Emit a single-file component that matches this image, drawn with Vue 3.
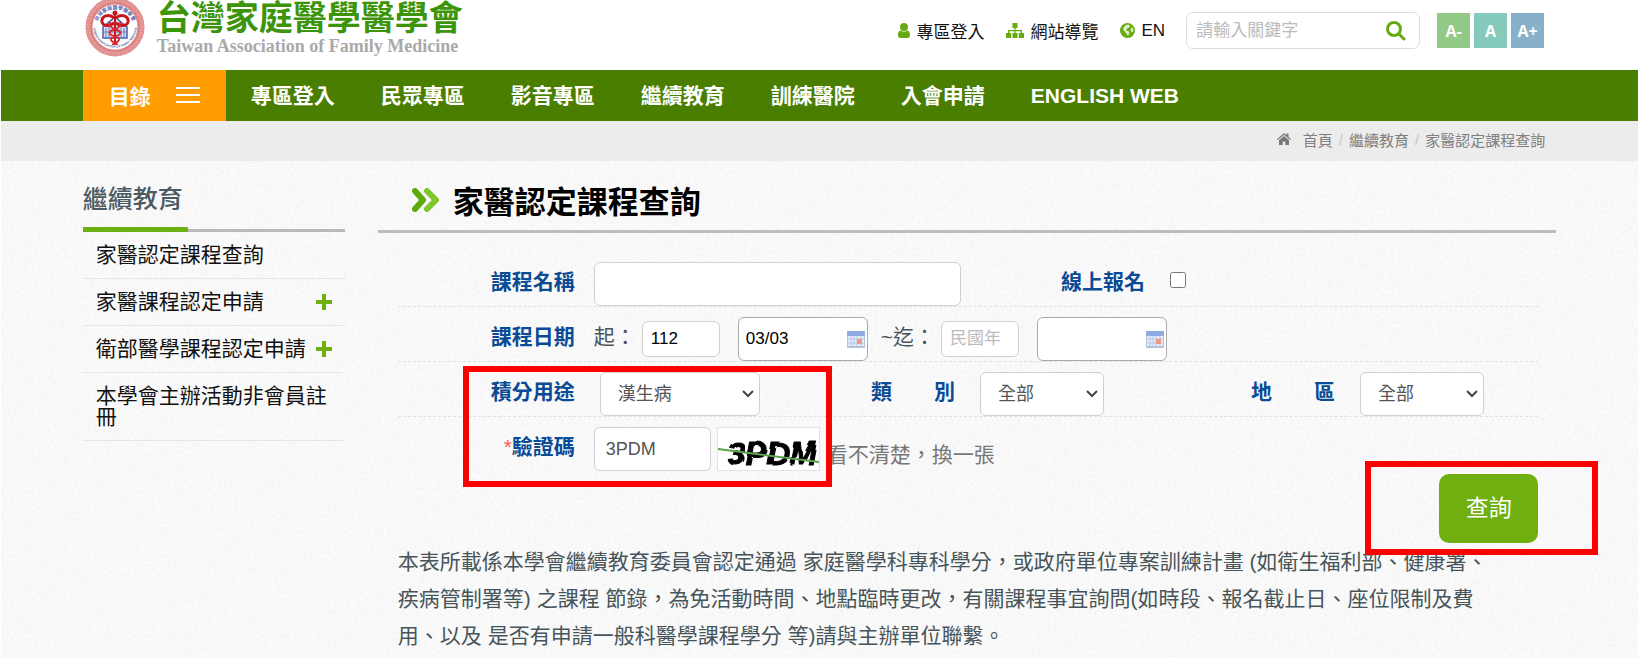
<script setup>
import { ref } from 'vue'

const topLinks = [
  { icon: 'user', text: '專區登入' },
  { icon: 'sitemap', text: '網站導覽' },
  { icon: 'globe', text: 'EN' },
]
const sizes = [
  { text: 'A-', cls: 'small' },
  { text: 'A', cls: 'normal' },
  { text: 'A+', cls: 'large' },
]
const navItems = ['專區登入', '民眾專區', '影音專區', '繼續教育', '訓練醫院', '入會申請', 'ENGLISH WEB']
const sideItems = [
  { text: '家醫認定課程查詢', more: false },
  { text: '家醫課程認定申請', more: true },
  { text: '衛部醫學課程認定申請', more: true },
  { text: '本學會主辦活動非會員註冊', more: false },
]
const keyword = ref('')
const courseName = ref('')
const online = ref(false)
const startYear = ref('112')
const startDay = ref('03/03')
const endYear = ref('')
const endDay = ref('')
const usage = ref('漢生病')
const category = ref('全部')
const region = ref('全部')
const code = ref('3PDM')
</script>

<template>
  <div class="page" lang="zh-Hant">
    <header class="top container">
      <a class="brand" href="#">
        <svg class="seal" viewBox="0 0 60 60" aria-hidden="true">
          <defs>
            <path id="arcTop" d="M11.5 27 A19 19 0 0 1 48.500 27" />
            <path id="arcBottom" d="M8.500 24 A22 22 0 1 0 51.500 24" />
          </defs>
          <circle cx="30" cy="30" r="26" fill="#fff" stroke="#e08c8a" stroke-width="7" />
          <circle cx="30" cy="30" r="28" fill="none" stroke="#f3c9c6" stroke-width="1" stroke-dasharray="1 2" />
          <circle cx="30" cy="30" r="26" fill="none" stroke="#f3c9c6" stroke-width="1" stroke-dasharray="1 1.500" />
          <circle cx="30" cy="30" r="24" fill="none" stroke="#d67372" stroke-width="1" stroke-dasharray="2 1" />
          <text class="seal-text" font-size="5"><textPath href="#arcTop" startOffset="50%" text-anchor="middle">台灣家庭醫學醫學會</textPath></text>
          <text class="seal-text" font-size="3"><textPath href="#arcBottom" startOffset="50%" text-anchor="middle">TAIWAN ASSOCIATION OF FAMILY MEDICINE</textPath></text>
          <path d="M18 30 L30 20 L42 30 V41 H18 Z" fill="#d5dcf0" stroke="#4a5fae" stroke-width="1.500" />
          <path d="M21 31 V41 M24 28 V41 M36 28 V41 M39 31 V41 M18 35 H42" stroke="#6d80bf" stroke-width="1" />
          <path d="M30 16 V48" stroke="#c9141a" stroke-width="2" />
          <circle cx="30" cy="16" r="2.500" fill="#c9141a" />
          <path d="M29 21 C24 16 16 19 17 25 C18 29 24 30 29 26 M31 21 C36 16 44 19 43 25 C42 29 36 30 31 26" fill="none" stroke="#c9141a" stroke-width="3" />
          <path d="M25 25 C22 33 38 32 35 37 C33 40 25 39 26 43 C27 46 32 45 32 48 M35 25 C38 33 22 32 25 37 C27 40 35 39 34 43 C33 46 28 45 28 48" fill="none" stroke="#d9262b" stroke-width="2" />
        </svg>
        <span class="brand-text">
          <span class="brand-zh">台灣家庭醫學醫學會</span>
          <span class="brand-en">Taiwan Association of Family Medicine</span>
        </span>
      </a>
      <div class="tools">
        <a v-for="l in topLinks" :key="l.text" class="tool" href="#">
          <svg v-if="l.icon === 'user'" class="ic-user" viewBox="0 0 12 15" aria-hidden="true">
            <circle cx="6" cy="4" r="4" />
            <path d="M3 7.500 C0.500 7.500 0 10 0 12 C0 14 1 15 2.500 15 H9.500 C11 15 12 14 12 12 C12 10 11.500 7.500 9 7.500 C7 9.200 5 9.200 3 7.500 Z" />
          </svg>
          <svg v-else-if="l.icon === 'sitemap'" class="ic-map" viewBox="0 0 18 15" aria-hidden="true">
            <path d="M6.500 0 H11.500 V5 H9.600 V7 H16 V10 H18 V15 H12.800 V10 H14.600 V8.300 H9.600 V10 H11.500 V15 H6.500 V10 H8.400 V8.300 H3.400 V10 H5.200 V15 H0 V10 H2 V7 H8.400 V5 H6.500 Z" />
          </svg>
          <svg v-else class="ic-globe" viewBox="0 0 15 15" aria-hidden="true">
            <circle cx="7.500" cy="7.500" r="7.500" />
            <path class="land" d="M6 2 L8.500 1.500 L10 3 L8.500 5 L7 5.500 L6 7.500 L8.500 8 L9.500 10 L8 13 L6.500 10.500 L5 9 L3 6.500 L4 4 Z M11.500 4 L13.200 6 L13.500 8 L12 9.500 L10.500 7.500 Z" />
          </svg>
          <span>{{ l.text }}</span>
        </a>
        <form class="search" role="search" @submit.prevent>
          <input v-model="keyword" type="text" placeholder="請輸入關鍵字" aria-label="請輸入關鍵字" />
          <button type="submit" aria-label="搜尋">
            <svg viewBox="0 0 20 20"><circle cx="8" cy="8" r="6.500" /><path d="M13 13 L18 18" /></svg>
          </button>
        </form>
        <div class="sizes">
          <button v-for="s in sizes" :key="s.text" type="button" :class="s.cls">{{ s.text }}</button>
        </div>
      </div>
    </header>

    <nav class="nav">
      <div class="container nav-in">
        <button class="menu" type="button">
          <span>目錄</span>
          <svg viewBox="0 0 24 18" aria-hidden="true"><path d="M0 2 H24 M0 9 H24 M0 16 H24" /></svg>
        </button>
        <a v-for="n in navItems" :key="n" href="#">{{ n }}</a>
      </div>
    </nav>

    <div class="crumbs">
      <div class="container crumbs-in">
        <svg viewBox="0 0 14 12" aria-hidden="true">
          <path d="M7 0 L9.500 2.200 V0.500 H11.500 V4 L14 6.200 L13.200 7 L7 1.800 L0.800 7 L0 6.200 Z M7 3 L12 7.200 V12 H8.300 V8.500 H5.700 V12 H2 V7.200 Z" />
        </svg>
        <a href="#">首頁</a><i>/</i><a href="#">繼續教育</a><i>/</i><a href="#">家醫認定課程查詢</a>
      </div>
    </div>

    <div class="body">
      <svg class="paper" aria-hidden="true">
        <filter id="grain">
          <feTurbulence type="fractalNoise" baseFrequency="0.3" numOctaves="2" seed="4" />
          <feColorMatrix type="matrix" values="0 0 0 0 0.45  0 0 0 0 0.45  0 0 0 0 0.45  0.18 0 0 0 -0.07" />
        </filter>
        <rect width="100%" height="100%" filter="url(#grain)" />
      </svg>
      <div class="container columns">
        <aside class="side">
          <h2>繼續教育</h2>
          <ul>
            <li v-for="s in sideItems" :key="s.text">
              <a href="#">{{ s.text }}</a>
              <svg v-if="s.more" viewBox="0 0 16 16" aria-hidden="true"><path d="M6 0 H10 V6 H16 V10 H10 V16 H6 V10 H0 V6 H6 Z" /></svg>
            </li>
          </ul>
        </aside>

        <main class="main">
          <h1>
            <svg viewBox="0 0 28 24" aria-hidden="true">
              <path d="M3 3 L11 12 L3 21" stroke="#5fa909" />
              <path d="M15 3 L24 12 L15 21" stroke="#7fc72c" />
            </svg>
            家醫認定課程查詢
          </h1>
          <form class="form" @submit.prevent>
            <div class="row two">
              <div class="cell">
                <label for="name">課程名稱</label>
                <input id="name" v-model="courseName" class="box wide" type="text" />
              </div>
              <div class="cell">
                <label for="online">線上報名</label>
                <input id="online" v-model="online" class="tick" type="checkbox" />
              </div>
            </div>
            <div class="row">
              <div class="cell">
                <label for="startYear">課程日期</label>
                <span class="word">起：</span>
                <input id="startYear" v-model="startYear" class="box year" type="text" placeholder="民國年" />
                <span class="date">
                  <input v-model="startDay" class="box" type="text" aria-label="起日" />
                  <svg viewBox="0 0 18 17" aria-hidden="true"><rect width="18" height="17" rx="1" fill="#b4c1da" /><rect width="18" height="5" rx="1" fill="#8fabe2" /><path d="M1 5 H17 V15 H1 Z" fill="#e6edfa" /><path d="M4 5 V15 M7 5 V15 M10 5 V15 M14 5 V15 M1 8 H17 M1 12 H17" stroke="#b9c9e8" /><rect x="10" y="8" width="5" height="5" fill="#f09a84" /></svg>
                </span>
                <span class="word till">~迄：</span>
                <input v-model="endYear" class="box year" type="text" placeholder="民國年" aria-label="迄年" />
                <span class="date">
                  <input v-model="endDay" class="box" type="text" aria-label="迄日" />
                  <svg viewBox="0 0 18 17" aria-hidden="true"><rect width="18" height="17" rx="1" fill="#b4c1da" /><rect width="18" height="5" rx="1" fill="#8fabe2" /><path d="M1 5 H17 V15 H1 Z" fill="#e6edfa" /><path d="M4 5 V15 M7 5 V15 M10 5 V15 M14 5 V15 M1 8 H17 M1 12 H17" stroke="#b9c9e8" /><rect x="10" y="8" width="5" height="5" fill="#f09a84" /></svg>
                </span>
              </div>
            </div>
            <div class="row three">
              <div class="cell">
                <label for="usage">積分用途</label>
                <span class="pick long">
                  <select id="usage" v-model="usage" class="box"><option>漢生病</option></select>
                  <svg viewBox="0 0 12 8" aria-hidden="true"><path d="M1 1 L6 6 L11 1" /></svg>
                </span>
              </div>
              <div class="cell">
                <label for="category">類　　別</label>
                <span class="pick">
                  <select id="category" v-model="category" class="box"><option>全部</option></select>
                  <svg viewBox="0 0 12 8" aria-hidden="true"><path d="M1 1 L6 6 L11 1" /></svg>
                </span>
              </div>
              <div class="cell">
                <label for="region">地　　區</label>
                <span class="pick">
                  <select id="region" v-model="region" class="box"><option>全部</option></select>
                  <svg viewBox="0 0 12 8" aria-hidden="true"><path d="M1 1 L6 6 L11 1" /></svg>
                </span>
              </div>
            </div>
            <div class="row last">
              <div class="cell">
                <label for="code"><b>*</b>驗證碼</label>
                <input id="code" v-model="code" class="box code" type="text" />
                <svg class="captcha" viewBox="0 0 101 42">
                  <filter id="wobble" x="-10%" y="-20%" width="120%" height="140%">
                    <feTurbulence type="turbulence" baseFrequency="0.04" numOctaves="1" seed="7" />
                    <feDisplacementMap in="SourceGraphic" scale="4" />
                  </filter>
                  <text x="8" y="35" font-size="32" filter="url(#wobble)">3PDM</text>
                  <path d="M0 21 L101 34" />
                </svg>
                <a class="change" href="#">看不清楚，換一張</a>
              </div>
            </div>
            <div class="mark mark-fields"></div>
            <div class="actions">
              <div class="submit">
                <button type="submit">查詢</button>
                <div class="mark mark-submit"></div>
              </div>
            </div>
          </form>
          <p>本表所載係本學會繼續教育委員會認定通過 家庭醫學科專科學分，或政府單位專案訓練計畫 (如衛生福利部、健康署、疾病管制署等) 之課程 節錄，為免活動時間、地點臨時更改，有關課程事宜詢問(如時段、報名截止日、座位限制及費用、以及 是否有申請一般科醫學課程學分 等)請與主辦單位聯繫。</p>
        </main>
      </div>
    </div>
  </div>
</template>

<style>
body {
  margin: 0;
  background: #fff;
}
</style>

<style scoped>
* {
  box-sizing: border-box;
}
.page {
  min-height: 100vh;
  display: flex;
  flex-direction: column;
  padding: 0 1px;
  color: #47555a;
  font-family: "Liberation Sans", "Noto Sans CJK TC", sans-serif;
}
a {
  color: inherit;
  text-decoration: none;
}
button,
input,
select {
  font-family: inherit;
  margin: 0;
}
h1,
h2,
p,
ul {
  margin: 0;
  padding: 0;
}
.container {
  width: 90%;
  margin: 0 auto;
}
.top {
  height: 70px;
  display: flex;
  justify-content: space-between;
  align-items: flex-start;
  padding-right: 12px;
}
.brand {
  display: flex;
  gap: 12px;
  padding-left: 2px;
}
.seal {
  width: 60px;
  height: 60px;
  margin-top: -3px;
}
.seal-text {
  fill: #4a5fae;
  font-family: "Liberation Sans", "Noto Sans CJK TC", sans-serif;
  font-weight: bold;
}
.brand-text {
  display: flex;
  flex-direction: column;
  white-space: nowrap;
}
.brand-zh {
  color: #3c9408;
  font-size: 34px;
  line-height: 36px;
  font-weight: bold;
}
.brand-en {
  color: #a9a9a9;
  font: bold 18px/20px "Liberation Serif", serif;
}
.tools {
  display: flex;
  align-items: center;
  padding-top: 12px;
  color: #111;
  font-size: 17px;
}
.tool {
  display: flex;
  align-items: center;
  gap: 7px;
  margin-right: 21px;
  white-space: nowrap;
}
.tool svg {
  height: 15px;
  fill: #66ab13;
}
.ic-user {
  width: 12px;
}
.ic-map {
  width: 18px;
}
.ic-globe {
  width: 15px;
}
.tool .land {
  fill: #dff0c8;
}
.search {
  display: flex;
  width: 234px;
  height: 37px;
  border: 1px solid #ddd;
  border-radius: 7px;
  background: #fff;
}
.search input {
  flex: 1;
  min-width: 0;
  border: 0;
  padding: 0 9px;
  background: none;
  font-size: 17px;
}
input::placeholder {
  color: #bbb;
  opacity: 1;
}
.search button {
  width: 46px;
  padding: 0;
  border: 0;
  background: none;
}
.search svg {
  display: block;
  width: 20px;
  height: 20px;
  margin: 0 auto;
  fill: none;
  stroke: #66ab13;
  stroke-width: 3;
  stroke-linecap: round;
}
.sizes {
  display: flex;
  gap: 4px;
  margin-left: 17px;
}
.sizes button {
  width: 33px;
  height: 35px;
  padding: 0;
  border: 0;
  color: #fff;
  font: bold 16px "Open Sans", sans-serif;
}
.small {
  background: #93c987;
}
.normal {
  background: #86cabc;
}
.large {
  background: #87b1cb;
}
.nav {
  background: #4a7e00;
}
.nav-in {
  display: flex;
  height: 51px;
  color: #fff;
  font-size: 21px;
  font-weight: bold;
  line-height: 52px;
  white-space: nowrap;
}
.menu {
  width: 143px;
  margin-right: 2px;
  padding: 0 26px 2px;
  border: 0;
  background: #ff9c00;
  color: #fff;
  font-size: 21px;
  font-weight: bold;
  display: flex;
  align-items: center;
  justify-content: space-between;
}
.menu svg {
  width: 24px;
  height: 18px;
  stroke: #fff;
  stroke-width: 2;
}
.nav-in a {
  padding: 0 23px;
}
.crumbs {
  background: #ececec;
}
.crumbs-in {
  display: flex;
  align-items: center;
  justify-content: flex-end;
  height: 40px;
  padding-right: 11px;
  padding-bottom: 4px;
  color: #808080;
  font-size: 15px;
}
.crumbs-in svg {
  width: 14px;
  height: 12px;
  margin-right: 12px;
  fill: #777;
}
.crumbs-in i {
  margin: 0 6px;
  color: #c4c4c4;
  font-style: normal;
}
.body {
  position: relative;
  flex: 1;
  background: #fafafa;
}
.paper {
  position: absolute;
  inset: 0;
  width: 100%;
  height: 100%;
}
.columns {
  position: relative;
  display: flex;
  gap: 33px;
}
.side {
  width: 262px;
  flex: none;
}
.side h2 {
  height: 71px;
  border-bottom: 3px solid;
  border-image: linear-gradient(90deg, #6db010 40%, #b9b9b9 40%) 1;
  color: #4c5b63;
  font-size: 25px;
  font-weight: 500;
  line-height: 76px;
  background: linear-gradient(#6db010, #6db010) left bottom / 40% 2px no-repeat;
  background-clip: padding-box;
}
.side ul {
  list-style: none;
}
.side li {
  display: flex;
  align-items: center;
  justify-content: space-between;
  padding: 12px 13px 13px;
  border-bottom: 1px solid #e6e6e6;
  color: #111;
  font-size: 21px;
  line-height: 21px;
}
.side li svg {
  flex: none;
  width: 16px;
  height: 16px;
  fill: #6db010;
}
.main {
  flex: 1;
  min-width: 0;
}
.main h1 {
  display: flex;
  align-items: center;
  gap: 13px;
  height: 72px;
  padding: 8px 0 0 34px;
  border-bottom: 3px solid #bdbdbd;
  color: #000;
  font-size: 31px;
  font-weight: bold;
}
.main h1 svg {
  width: 28px;
  height: 24px;
  fill: none;
  stroke-width: 6;
  stroke-linecap: round;
  stroke-linejoin: round;
}
.form {
  position: relative;
  margin: 19px 18px 0 20px;
}
.row {
  display: grid;
  height: 55px;
  padding-top: 10px;
  border-bottom: 1px dashed #e0e0e0;
}
.two {
  grid-template-columns: repeat(2, 1fr);
}
.three {
  grid-template-columns: repeat(3, 1fr);
}
.last {
  border-color: transparent;
}
.cell {
  display: flex;
  align-items: center;
  height: 44px;
  white-space: nowrap;
}
.cell label {
  width: 177px;
  margin-right: 19px;
  color: #0b4b95;
  font-size: 21px;
  font-weight: bold;
  line-height: 40px;
  text-align: right;
  align-self: flex-start;
}
.cell label b {
  color: #ff5a4a;
  font-weight: 400;
}
.box {
  height: 44px;
  border: 1px solid #d0d0d0;
  border-radius: 6px;
  background: #fff;
  color: #555;
  font-size: 18px;
}
.wide {
  flex: 1;
  min-width: 0;
  margin-right: 7px;
}
.tick {
  width: 16px;
  height: 16px;
  margin: 0 0 8px 6px;
}
.word {
  margin-right: 6px;
  font-size: 21px;
  line-height: 40px;
  align-self: flex-start;
}
.till {
  margin: 0 6px 0 13px;
}
.year {
  width: 78px;
  height: 36px;
  margin-right: 18px;
  padding: 0 8px;
  color: #000;
  font-size: 17px;
}
.date {
  position: relative;
  display: block;
  width: 130px;
}
.date .box {
  width: 100%;
  padding: 0 24px 0 7px;
  border-color: #aaa;
  color: #000;
  font-size: 17px;
}
.date svg {
  position: absolute;
  right: 3px;
  top: 14px;
  width: 18px;
  height: 17px;
}
.pick {
  position: relative;
  width: 124px;
  margin-left: 6px;
}
.long {
  width: 160px;
}
.pick select {
  display: block;
  width: 100%;
  padding: 0 24px 0 17px;
  appearance: none;
}
.pick svg {
  position: absolute;
  right: 6px;
  top: 18px;
  width: 12px;
  height: 8px;
  fill: none;
  stroke: #444;
  stroke-width: 2;
  pointer-events: none;
}
.code {
  width: 117px;
  margin-right: 6px;
  padding: 0 11px;
}
.captcha {
  width: 103px;
  height: 44px;
  flex: none;
  border: 1px solid #e2e2e2;
  background: #fff;
}
.captcha text {
  font-family: "Liberation Sans", sans-serif;
  font-weight: bold;
  font-style: italic;
  stroke: #000;
  stroke-width: 1;
}
.captcha path {
  stroke: #5aa34c;
  stroke-width: 2;
}
.change {
  margin: 7px 0 0 7px;
  color: #777;
  font-size: 21px;
}
.actions {
  display: flex;
  justify-content: flex-end;
  padding-top: 2px;
}
.submit {
  position: relative;
}
.submit button {
  display: block;
  width: 99px;
  height: 69px;
  padding: 0 0 6px;
  border: 0;
  border-radius: 10px;
  background: #6fb010;
  color: #fff;
  font-size: 23px;
}
.mark {
  position: absolute;
  border: 6px solid #f00;
  pointer-events: none;
}
.mark-fields {
  left: 65px;
  top: 114px;
  width: 369px;
  height: 121px;
}
.mark-submit {
  inset: -13px -60px -12px -74px;
}
.main p {
  padding: 0 57px 0 20px;
  font-size: 21px;
  line-height: 37px;
}
</style>
